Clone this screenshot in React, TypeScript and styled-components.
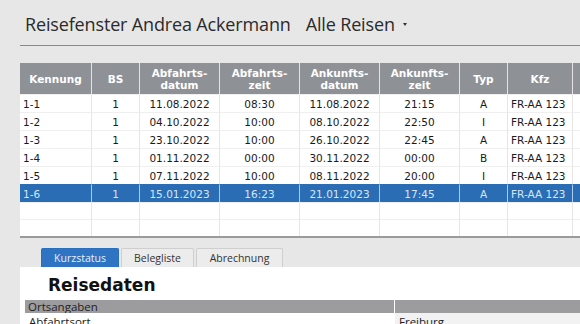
import React from "react";
import styled, { createGlobalStyle } from "styled-components";

const Global = createGlobalStyle`
  html, body { margin: 0; padding: 0; }
  body {
    background: #e7e7e7;
    width: 580px;
    height: 324px;
    overflow: hidden;
    font-family: "DejaVu Sans", sans-serif;
  }
`;

const Page = styled.div`
  width: 580px;
  box-sizing: border-box;
  padding-left: 20px;
  display: flex;
  flex-direction: column;
  overflow: hidden;
`;

const TitleBar = styled.div`
  height: 46px;
  box-sizing: border-box;
  border-bottom: 1px solid #8a8a8a;
  display: flex;
  align-items: center;
  gap: 15px;
  padding: 2px 0 0 5px;
  font-family: "Open Sans", sans-serif;
  font-size: 18px;
  color: #2b2b2b;
`;

const TitleText = styled.span`
  letter-spacing: -0.15px;
`;

const Dropdown = styled.span`
  display: inline-flex;
  align-items: center;
  gap: 8px;
  letter-spacing: -0.15px;
`;

const Caret = styled.span`
  width: 0;
  height: 0;
  border-left: 2.5px solid transparent;
  border-right: 2.5px solid transparent;
  border-top: 3px solid #333;
  margin-top: 1px;
`;

const GridWrap = styled.div`
  margin-top: 17px;
  width: 560px;
  overflow: hidden;
  background: #fff;
  border-bottom: 2px solid #9a9a9a;
`;

const Grid = styled.table`
  border-collapse: separate;
  border-spacing: 0;
  table-layout: fixed;
  width: 600px;
  font-size: 10.5px;
`;

const Th = styled.th`
  height: 31px;
  padding: 0;
  box-sizing: border-box;
  background: #8e9196;
  color: #fff;
  font-weight: bold;
  font-size: 10.5px;
  line-height: 12px;
  text-align: center;
  border-left: 1px solid #e4e4e4;
  &:first-child { border-left: none; }
`;

const Row = styled.tr<{ $sel?: boolean; $h: number }>`
  height: ${(p) => p.$h}px;
  background: ${(p) => (p.$sel ? "#2b6db4" : "#fff")};
  color: ${(p) => (p.$sel ? "#d5e7f9" : "#1a1a1a")};
  & > td {
    height: ${(p) => p.$h - 1}px;
    border-left: 1px solid ${(p) => (p.$sel ? "#a8cbee" : "#e6e6e6")};
    border-top: 1px solid ${(p) => (p.$sel ? "#2b6db4" : "#efefef")};
  }
  & > td:first-child { border-left: none; }
`;

const Td = styled.td<{ $align?: "left" | "center" }>`
  padding: 0 3px;
  text-align: ${(p) => p.$align ?? "center"};
  white-space: nowrap;
  overflow: hidden;
`;

const Tabs = styled.div`
  margin-top: 10px;
  padding-left: 21px;
  display: flex;
  gap: 2px;
  height: 19px;
`;

const Tab = styled.div<{ $active?: boolean; $w: number }>`
  width: ${(p) => p.$w}px;
  box-sizing: border-box;
  display: flex;
  align-items: center;
  justify-content: center;
  font-family: "Open Sans", sans-serif;
  font-size: 10.5px;
  border: 1px solid ${(p) => (p.$active ? "#2a6fbd" : "#cfcfcf")};
  border-bottom: none;
  border-radius: 2px 2px 0 0;
  background: ${(p) => (p.$active ? "#2e74c2" : "#ececec")};
  color: ${(p) => (p.$active ? "#e6f0fb" : "#333")};
`;

const Content = styled.div`
  background: #fff;
  height: 60px;
  padding-top: 6px;
  box-sizing: border-box;
`;

const Heading = styled.div`
  font-family: "DejaVu Sans", sans-serif;
  font-weight: bold;
  font-size: 17px;
  color: #111;
  padding-left: 28px;
  height: 27px;
  line-height: 24px;
`;

const SectionRow = styled.div`
  margin-left: 5px;
  display: grid;
  grid-template-columns: 369px 1fr;
  column-gap: 1px;
  font-family: "Open Sans", sans-serif;
  font-size: 11.5px;
  line-height: 13px;
`;

const SectionHead = styled.div`
  background: #9c9c9e;
  color: #222;
  height: 13px;
  padding-left: 3px;
`;

const Cell = styled.div<{ $shade?: boolean }>`
  background: ${(p) => (p.$shade ? "#f2f2f2" : "#fff")};
  color: #222;
  padding: 2px 0 0 4px;
  height: 14px;
`;

const cols = [
  { label: "Kennung", w: 71 },
  { label: "BS", w: 48 },
  { label: "Abfahrts-\ndatum", w: 80 },
  { label: "Abfahrts-\nzeit", w: 80 },
  { label: "Ankunfts-\ndatum", w: 80 },
  { label: "Ankunfts-\nzeit", w: 80 },
  { label: "Typ", w: 48 },
  { label: "Kfz", w: 65 },
  { label: "", w: 48 },
];

const rows = [
  ["1-1", "1", "11.08.2022", "08:30", "11.08.2022", "21:15", "A", "FR-AA 123"],
  ["1-2", "1", "04.10.2022", "10:00", "08.10.2022", "22:50", "I", "FR-AA 123"],
  ["1-3", "1", "23.10.2022", "10:00", "26.10.2022", "22:45", "A", "FR-AA 123"],
  ["1-4", "1", "01.11.2022", "00:00", "30.11.2022", "00:00", "B", "FR-AA 123"],
  ["1-5", "1", "07.11.2022", "10:00", "08.11.2022", "20:00", "I", "FR-AA 123"],
  ["1-6", "1", "15.01.2023", "16:23", "21.01.2023", "17:45", "A", "FR-AA 123"],
];

export default function App() {
  return (
    <>
      <Global />
      <Page>
        <TitleBar>
          <TitleText>Reisefenster Andrea Ackermann</TitleText>
          <Dropdown>
            Alle Reisen <Caret />
          </Dropdown>
        </TitleBar>
        <GridWrap>
          <Grid>
            <colgroup>
              {cols.map((c, i) => (
                <col key={i} style={{ width: c.w }} />
              ))}
            </colgroup>
            <thead>
              <tr>
                {cols.map((c, i) => (
                  <Th key={i}>
                    {c.label.split("\n").map((l, j) => (
                      <React.Fragment key={j}>
                        {j > 0 && <br />}
                        {l}
                      </React.Fragment>
                    ))}
                  </Th>
                ))}
              </tr>
            </thead>
            <tbody>
              {rows.map((r, i) => (
                <Row key={i} $h={18} $sel={i === 5}>
                  {r.map((v, j) => (
                    <Td key={j} $align={j === 0 || j === 7 ? "left" : "center"}>
                      {v}
                    </Td>
                  ))}
                  <Td />
                </Row>
              ))}
              {[0, 1].map((i) => (
                <Row key={"e" + i} $h={17}>
                  {cols.map((_, j) => (
                    <Td key={j} />
                  ))}
                </Row>
              ))}
            </tbody>
          </Grid>
        </GridWrap>
        <Tabs>
          <Tab $active $w={78}>Kurzstatus</Tab>
          <Tab $w={73}>Belegliste</Tab>
          <Tab $w={87}>Abrechnung</Tab>
        </Tabs>
        <Content>
          <Heading>Reisedaten</Heading>
          <SectionRow>
            <SectionHead>Ortsangaben</SectionHead>
            <SectionHead />
            <Cell>Abfahrtsort</Cell>
            <Cell $shade>Freiburg</Cell>
          </SectionRow>
        </Content>
      </Page>
    </>
  );
}
